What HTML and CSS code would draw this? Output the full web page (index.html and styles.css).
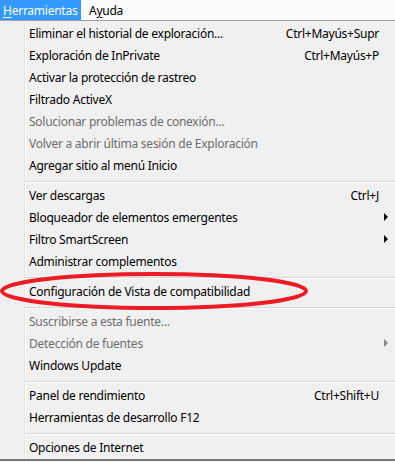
FILE: index.html
```html
<!DOCTYPE html>
<html lang="es">
<head>
    <meta charset="UTF-8">
    <meta name="viewport" content="width=device-width, initial-scale=1.0">
    <title>Herramientas</title>
    <link rel="stylesheet" href="styles.css">
</head>
<body>

    <!-- Barra de menu -->
    <div class="menubar">
        <span class="top-item active"><u>H</u>erramientas</span>
        <span class="top-item">A<u>y</u>uda</span>
    </div>

    <!-- Menu desplegable -->
    <div class="menu">
        <div class="item"><span class="label">Eliminar el historial de exploración...</span><span class="shortcut">Ctrl+Mayús+Supr</span><span class="arrow"></span></div>
        <div class="item"><span class="label">Exploración de InPrivate</span><span class="shortcut">Ctrl+Mayús+P</span><span class="arrow"></span></div>
        <div class="item"><span class="label">Activar la protección de rastreo</span><span class="shortcut"></span><span class="arrow"></span></div>
        <div class="item"><span class="label">Filtrado ActiveX</span><span class="shortcut"></span><span class="arrow"></span></div>
        <div class="item disabled"><span class="label">Solucionar problemas de conexión...</span><span class="shortcut"></span><span class="arrow"></span></div>
        <div class="item disabled"><span class="label">Volver a abrir última sesión de Exploración</span><span class="shortcut"></span><span class="arrow"></span></div>
        <div class="item"><span class="label">Agregar sitio al menú Inicio</span><span class="shortcut"></span><span class="arrow"></span></div>
        <div class="sep"></div>
        <div class="item"><span class="label">Ver descargas</span><span class="shortcut">Ctrl+J</span><span class="arrow"></span></div>
        <div class="item"><span class="label">Bloqueador de elementos emergentes</span><span class="shortcut"></span><span class="arrow sub"></span></div>
        <div class="item"><span class="label">Filtro SmartScreen</span><span class="shortcut"></span><span class="arrow sub"></span></div>
        <div class="item"><span class="label">Administrar complementos</span><span class="shortcut"></span><span class="arrow"></span></div>
        <div class="sep"></div>
        <div class="item"><span class="label">Configuración de Vista de compatibilidad</span><span class="shortcut"></span><span class="arrow"></span></div>
        <div class="sep"></div>
        <div class="item disabled"><span class="label">Suscribirse a esta fuente...</span><span class="shortcut"></span><span class="arrow"></span></div>
        <div class="item disabled"><span class="label">Detección de fuentes</span><span class="shortcut"></span><span class="arrow sub"></span></div>
        <div class="item"><span class="label">Windows Update</span><span class="shortcut"></span><span class="arrow"></span></div>
        <div class="sep"></div>
        <div class="item"><span class="label">Panel de rendimiento</span><span class="shortcut">Ctrl+Shift+U</span><span class="arrow"></span></div>
        <div class="item"><span class="label">Herramientas de desarrollo F12</span><span class="shortcut"></span><span class="arrow"></span></div>
        <div class="sep"></div>
        <div class="item"><span class="label">Opciones de Internet</span><span class="shortcut"></span><span class="arrow"></span></div>
    </div>

    <!-- Marca roja dibujada encima -->
    <svg class="markup" width="395" height="462" viewBox="0 0 395 462">
        <ellipse cx="154" cy="291" rx="152" ry="17" fill="none" stroke="#ed1c24" stroke-width="4"/>
    </svg>

</body>
</html>
```

FILE: styles.css
```css
body {
    font-family: "Noto Sans", "Open Sans", sans-serif;
    font-size: 12px;
    letter-spacing: -0.25px;
    margin: 0;
    padding: 0;
    background-color: #f0f0f0;
    color: #000;
    position: relative;
    width: 395px;
    height: 462px;
    overflow: hidden;
}

.menubar {
    display: flex;
    height: 20px;
    background-color: #fbfbfb;
    border-bottom: 1px solid #a0a0a0;
}

.top-item {
    display: flex;
    align-items: center;
    padding: 0 8px;
    white-space: nowrap;
}

.top-item.active {
    background-color: #3399ff;
    color: white;
    box-sizing: border-box;
    width: 81px;
    padding: 0 0 0 3px;
}

.top-item u {
    text-decoration-thickness: 1px;
    text-underline-offset: 2px;
}

.menu {
    padding: 1px 0 1px 0;
    border-bottom: 2px solid #7a7a7a;
    background: linear-gradient(to right, #f0f0f0 24px, #e2e3e3 24px, #e2e3e3 25px, #fff 25px, #fff 26px, #f0f0f0 26px);
}

.item {
    display: flex;
    align-items: center;
    height: 22px;
    padding: 0 7px 0 29px;
    white-space: nowrap;
}

.item .label {
    flex: 1;
}

.item .arrow {
    width: 4px;
    margin-left: 5px;
}

.item .arrow.sub {
    width: 0;
    height: 0;
    border-left: 4px solid #000;
    border-top: 4px solid transparent;
    border-bottom: 4px solid transparent;
}

.item.disabled {
    color: #6d6d6d;
}

.item.disabled .arrow.sub {
    border-left-color: #8a8a8a;
}

.sep {
    height: 1px;
    margin: 5px 0 1px 25px;
    border-top: 1px solid #d7d7d7;
    background-color: #fff;
}

.markup {
    position: absolute;
    top: 0;
    left: 0;
    pointer-events: none;
}
```
